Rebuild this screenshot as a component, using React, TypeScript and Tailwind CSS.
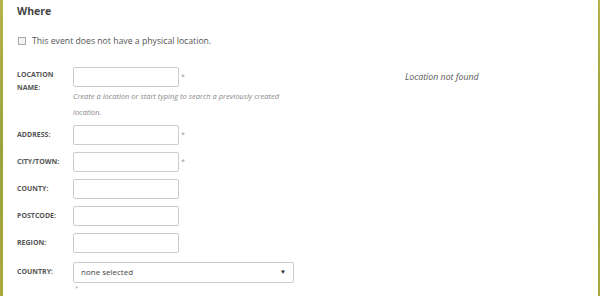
const fields = [
  { label: 'ADDRESS:', required: true },
  { label: 'CITY/TOWN:', required: true },
  { label: 'COUNTY:', required: false },
  { label: 'POSTCODE:', required: false },
  { label: 'REGION:', required: false },
];

const Label = ({ children }: any) => (
  <div className="w-[56px] pt-[3px] text-[7px] font-bold leading-[13px] text-[#555]">{children}</div>
);

const Box = () => <div className="h-[20px] w-[106px] rounded-[2px] border border-[#ccc] bg-white" />;

const Star = () => <span className="ml-[2px] pt-[5px] text-[7px] text-[#999]">*</span>;

export default function App() {
  return (
    <div
      className="flex h-[296px] w-[600px] bg-gradient-to-b from-[#b5b34a] via-[#9aa23a] to-[#a8a83c]"
      style={{ fontFamily: '"Open Sans", "Liberation Sans", sans-serif' }}
    >
      <div className="ml-[3px] mr-[2px] flex-1 bg-white pl-[14px]">
        <div className="pt-[4px] text-[10.5px] font-bold text-[#444]">Where</div>

        <label className="mt-[15px] flex items-center gap-[6px] text-[8.7px] text-[#555]">
          <span className="ml-[1px] h-[8px] w-[8px] border border-[#aaa] bg-[#f3f3f3]" />
          This event does not have a physical location.
        </label>

        <div className="mt-[19px] flex">
          <div className="flex w-[388px]">
            <div className="w-[56px] pt-[1px] text-[7px] font-bold leading-[13px] text-[#555]">
              LOCATION
              <br />
              NAME:
            </div>
            <div>
              <div className="flex">
                <Box />
                <Star />
              </div>
              <div className="mt-[1px] text-[7.5px] italic leading-[16px] text-[#888]">
                Create a location or start typing to search a previously created
                <br />
                location.
              </div>
            </div>
          </div>
          <div className="pt-[4px] text-[8.8px] italic text-[#555]">Location not found</div>
        </div>

        <div className="mt-[5px] flex flex-col gap-[7px]">
          {fields.map((f) => (
            <div key={f.label} className="flex">
              <Label>{f.label}</Label>
              <Box />
              {f.required && <Star />}
            </div>
          ))}
          <div className="mt-[2px] flex">
            <Label>COUNTRY:</Label>
            <div>
              <div className="flex h-[21px] w-[221px] items-center justify-between rounded-[2px] border border-[#ccc] bg-white px-[7px] text-[8px] text-[#444]">
                none selected
                <span className="text-[6px] text-[#222]">▼</span>
              </div>
              <div className="mt-[1px] pl-[2px] text-[6px] text-[#999]">*</div>
            </div>
          </div>
        </div>
      </div>
    </div>
  );
}
